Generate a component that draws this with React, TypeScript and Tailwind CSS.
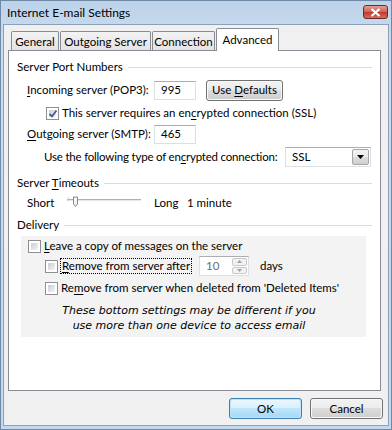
import React from 'react';

const U = ({ children }: { children: React.ReactNode }) => (
  <span className="underline decoration-1 underline-offset-[2px]">{children}</span>
);

const CheckBox = ({ checked = false }: { checked?: boolean }) => (
  <span className="relative flex w-[13px] h-[13px] shrink-0 border border-[#8e8f8f] bg-white p-[2px]">
    <span className="flex-1 bg-[linear-gradient(135deg,#c9cdd3,#f4f4f4)]" />
    {checked && (
      <svg className="absolute left-[1px] top-[1px]" width="10" height="10" viewBox="0 0 10 10">
        <path d="M1.5 5 L4 7.5 L8.5 1.5" fill="none" stroke="#3d5b9e" strokeWidth="1.8" />
      </svg>
    )}
  </span>
);

const Group = ({ children }: { children: React.ReactNode }) => (
  <div className="h-[20px] flex items-center pl-[8px] pr-[8px]">
    <span>{children}</span>
    <span className="flex-1 ml-[5px] h-px bg-[#d5dfe5]" />
  </div>
);

const TextBox = ({ value, className = '' }: { value: string; className?: string }) => (
  <div
    className={`h-[19px] border border-[#dbdfe6] border-t-[#abadb3] bg-white flex items-center pl-[6px] ${className}`}
  >
    {value}
  </div>
);

const Btn = ({ children, def = false, className = '' }: { children: React.ReactNode; def?: boolean; className?: string }) => (
  <div
    className={`h-[21px] rounded-[3px] border p-px ${def ? 'border-[#3c7fb1] bg-[#bfe4f8]' : 'border-[#707070] bg-[#f8f8f8]'} ${className}`}
  >
    <div
      className={`h-full rounded-[2px] flex items-center justify-center ${
        def
          ? 'bg-[linear-gradient(#eaf6fd_0%,#d9f0fc_50%,#bee6fd_50%,#a7d9f5_100%)]'
          : 'bg-[linear-gradient(#f2f2f2_0%,#ebebeb_50%,#dddddd_50%,#cfcfcf_100%)]'
      }`}
    >
      {children}
    </div>
  </div>
);

const Tab = ({ label, w, active = false }: { label: string; w: string; active?: boolean }) => (
  <div
    className={`ml-[1px] first:ml-[7px] border border-[#898c95] border-b-0 rounded-t-[2px] flex justify-center ${w} ${
      active
        ? 'h-[23px] -mb-px bg-white relative z-10 items-start pt-[3px]'
        : 'h-[19px] bg-[linear-gradient(#f3f3f3,#e3e3e3)] items-center pt-[1px]'
    }`}
  >
    {label}
  </div>
);

export default function App() {
  return (
    <div className="w-[392px] h-[430px] flex flex-col whitespace-nowrap bg-[linear-gradient(#bcd3ea,#cbdcef_40px,#c3d8ee)] border border-[#6f88a3] text-[11.5px] leading-[16px] text-black font-['Lato',sans-serif]">
      {/* title bar */}
      <div className="h-[23px] shrink-0 flex items-center pl-[6px] pr-[3px]">
        <span className="flex-1 text-[12px]">Internet E-mail Settings</span>
        <div className="w-[25px] h-[14px] -mt-[1px] rounded-[3px] border border-[#6d2a27] bg-[linear-gradient(#e3a096,#cf5f52_50%,#c2392c_51%,#d46d5c)] flex items-center justify-center">
          <svg width="11" height="9" viewBox="0 0 11 9">
            <path d="M1.5 1 L9.5 8 M9.5 1 L1.5 8" stroke="#fff" strokeWidth="2.2" />
          </svg>
        </div>
      </div>

      {/* client */}
      <div className="flex-1 mx-[2px] mb-[3px] border border-[#8aa1b9] bg-[#f0f0f0] flex flex-col pt-[3px]">
        <div className="h-[22px] flex items-end">
          <Tab label="General" w="w-[48px]" />
          <Tab label="Outgoing Server" w="w-[91px]" />
          <Tab label="Connection" w="w-[63px]" />
          <Tab label="Advanced" w="w-[63px]" active />
        </div>

        <div className="ml-[4px] w-[373px] h-[341px] border border-[#898c95] bg-white pt-[6px]">
          <Group>Server Port Numbers</Group>

          <div className="h-[26px] flex items-center pl-[18px]">
            <span className="w-[127px]">
              <U>I</U>ncoming server (POP3):
            </span>
            <TextBox value="995" className="w-[42px]" />
            <Btn className="ml-[10px] w-[77px]">
              <span>
                Use <U>D</U>efaults
              </span>
            </Btn>
          </div>

          <div className="h-[20px] flex items-center pl-[37px]">
            <CheckBox checked />
            <span className="ml-[3px]">
              This server requires an en<U>c</U>rypted connection (SSL)
            </span>
          </div>

          <div className="h-[22px] flex items-center pl-[18px]">
            <span className="w-[127px]">
              <U>O</U>utgoing server (SMTP):
            </span>
            <TextBox value="465" className="w-[42px]" />
          </div>

          <div className="h-[24px] flex items-center pl-[35px]">
            <span className="w-[241px] tracking-[-0.2px]">
              Use the following type of en<U>c</U>rypted connection:
            </span>
            <div className="w-[86px] h-[20px] border border-[#dbdfe6] border-t-[#abadb3] bg-white flex items-center pl-[6px] pr-px">
              <span className="flex-1">SSL</span>
              <div className="w-[17px] h-[16px] border border-[#a5a5a5] rounded-[2px] bg-[linear-gradient(#f2f2f2,#ebebeb_50%,#dddddd_50%,#cfcfcf)] flex items-center justify-center">
                <svg width="7" height="4" viewBox="0 0 7 4">
                  <path d="M0 0 H7 L3.5 4 Z" fill="#000" />
                </svg>
              </div>
            </div>
          </div>

          <div className="mt-[4px]">
            <Group>
              Server <U>T</U>imeouts
            </Group>
          </div>

          <div className="h-[20px] flex items-center pl-[18px]">
            <span className="w-[40px]">Short</span>
            <svg width="75" height="14" viewBox="0 0 75 14" className="shrink-0">
              <path d="M0 3.5 H74" stroke="#b0b0b0" strokeWidth="1" />
              <path d="M0 4.5 H74" stroke="#e8e8e8" strokeWidth="1" />
              <path d="M1 1.5 V5" stroke="#c8c8c8" strokeWidth="1" />
              <path d="M6.5 1 H10.5 V8 L8.5 10.5 L6.5 8 Z" fill="#f4f4f4" stroke="#8a8a8a" strokeWidth="1" />
            </svg>
            <span className="ml-[12px] w-[33px]">Long</span>
            <span>1 minute</span>
          </div>

          <div className="mt-[2px]">
            <Group>Delivery</Group>
          </div>

          <div className="ml-[12px] mt-[1px] w-[345px] h-[101px] bg-[#f3f3f3]">
            <div className="h-[20px] flex items-center pl-[7px]">
              <CheckBox />
              <span className="ml-[3px]">
                <U>L</U>eave a copy of messages on the server
              </span>
            </div>

            <div className="h-[20px] flex items-center">
              <div className="w-[178px] flex items-center pl-[24px]">
                <CheckBox />
                <span className="ml-[2px] px-px border border-dotted border-black leading-[14px]">
                  <U>R</U>emove from server after
                </span>
              </div>
              <div className="w-[50px] h-[20px] border border-[#dbdfe6] border-t-[#abadb3] bg-white flex items-center pl-[6px] pr-px text-[#6d6d6d]">
                <span className="flex-1">10</span>
                <div className="w-[15px] h-[16px] flex flex-col gap-px">
                  <div className="flex-1 border border-[#c8c8c8] rounded-[2px] bg-[#f2f2f2] flex items-center justify-center">
                    <svg width="5" height="3" viewBox="0 0 5 3">
                      <path d="M0 3 H5 L2.5 0 Z" fill="#a0a0a0" />
                    </svg>
                  </div>
                  <div className="flex-1 border border-[#c8c8c8] rounded-[2px] bg-[#f2f2f2] flex items-center justify-center">
                    <svg width="5" height="3" viewBox="0 0 5 3">
                      <path d="M0 0 H5 L2.5 3 Z" fill="#a0a0a0" />
                    </svg>
                  </div>
                </div>
              </div>
              <span className="ml-[11px]">days</span>
            </div>

            <div className="h-[20px] mt-[2px] flex items-center pl-[24px]">
              <CheckBox />
              <span className="ml-[3px]">
                Re<U>m</U>ove from server when deleted from 'Deleted Items'
              </span>
            </div>

            <div className="mt-[5px] pr-[9px] text-center italic text-[11px] leading-[15px] font-['DejaVu_Sans',sans-serif]">
              These bottom settings may be different if you
              <br />
              use more than one device to access email
            </div>
          </div>
        </div>

        <div className="mt-[7px] flex justify-end pr-[5px]">
          <Btn def className="w-[73px]">
            OK
          </Btn>
          <Btn className="ml-[8px] w-[73px]">Cancel</Btn>
        </div>
      </div>
    </div>
  );
}
